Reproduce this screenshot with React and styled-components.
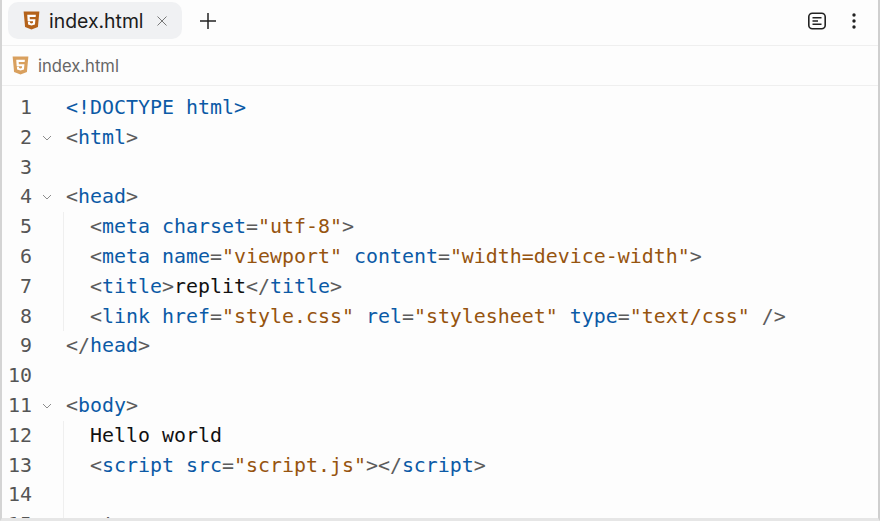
import React from "react";
import styled, { createGlobalStyle } from "styled-components";

const Global = createGlobalStyle`
  html, body {
    margin: 0;
    padding: 0;
    background: #fdfdfd;
    overflow: hidden;
  }
`;

const P = (t) => ["p", t];
const T = (t) => ["t", t];
const S = (t) => ["s", t];
const X = (t) => ["x", t];

const tag = (name) => [P("<"), T(name)];

const LINES = [
  { tokens: [T("<!DOCTYPE html>")] },
  { fold: true, tokens: [...tag("html"), P(">")] },
  { tokens: [] },
  { fold: true, tokens: [...tag("head"), P(">")] },
  { indent: true, tokens: [...tag("meta"), T(" charset"), P("="), S('"utf-8"'), P(">")] },
  {
    indent: true,
    tokens: [...tag("meta"), T(" name"), P("="), S('"viewport"'), T(" content"), P("="), S('"width=device-width"'), P(">")],
  },
  { indent: true, tokens: [...tag("title"), P(">"), X("replit"), P("</"), T("title"), P(">")] },
  {
    indent: true,
    tokens: [...tag("link"), T(" href"), P("="), S('"style.css"'), T(" rel"), P("="), S('"stylesheet"'), T(" type"), P("="), S('"text/css"'), P(" />")],
  },
  { tokens: [P("</"), T("head"), P(">")] },
  { tokens: [] },
  { fold: true, tokens: [...tag("body"), P(">")] },
  { indent: true, tokens: [X("Hello world")] },
  {
    indent: true,
    tokens: [...tag("script"), T(" src"), P("="), S('"script.js"'), P("></"), T("script"), P(">")],
  },
  { indent: true, tokens: [] },
  { indent: true, tokens: [P("<!--")] },
];

const TOKEN_COLORS = {
  p: "#5c5c5c",
  t: "#0b5aa6",
  s: "#96540f",
  x: "#111111",
};

const Html5Icon = ({ color, width, height }) => (
  <svg width={width} height={height} viewBox="0 0 16 18" preserveAspectRatio="none">
    <path fill={color} d="M0.6 0.5h14.8l-1.35 14.6L8 17.5l-6.05-2.4z" />
    <path
      fill="#fff"
      d="M4 3.6h8.1l-.2 2.2H6.3l.15 1.9h5.25l-.45 5L8 13.7l-3.2-1-.2-2.4h2l.1 1.05 1.3.4 1.3-.4.15-1.65H4.4z"
    />
  </svg>
);

const Chevron = () => (
  <svg width="10" height="6" viewBox="0 0 10 6" fill="none">
    <path d="M1 1l4 4 4-4" stroke="#8d8d8d" strokeWidth="1" />
  </svg>
);

const App = () => {
  return (
    <Frame>
      <Global />
      <TabBar>
        <Tab>
          <Html5Icon color="#b4621a" width={17} height={19} />
          <TabName>index.html</TabName>
          <svg width="10" height="10" viewBox="0 0 10 10">
            <path d="M0.5 0.5l9 9M9.5 0.5l-9 9" stroke="#777" strokeWidth="1" />
          </svg>
        </Tab>
        <PlusButton>
          <svg width="18" height="18" viewBox="0 0 18 18">
            <path d="M9 1v16M1 9h16" stroke="#222" strokeWidth="1.5" />
          </svg>
        </PlusButton>
        <TabActions>
          <svg width="20" height="20" viewBox="0 0 20 20" fill="none" stroke="#222" strokeWidth="1.6">
            <rect x="1.8" y="2.3" width="16.4" height="15.4" rx="3.5" />
            <path d="M5.5 6.7h9M5.5 10h5.5M5.5 13.3h9" />
          </svg>
          <svg width="4" height="16" viewBox="0 0 4 16" fill="#222">
            <circle cx="2" cy="2" r="1.7" />
            <circle cx="2" cy="8" r="1.7" />
            <circle cx="2" cy="14" r="1.7" />
          </svg>
        </TabActions>
      </TabBar>
      <PathBar>
        <Html5Icon color="#d9a05e" width={17} height={19} />
        <span>index.html</span>
      </PathBar>
      <Code>
        {LINES.map((line, i) => (
          <Line key={i}>
            <LineNo>{i + 1}</LineNo>
            <Fold>{line.fold && <Chevron />}</Fold>
            <Content $indent={line.indent}>
              {line.tokens.map(([kind, text], j) => (
                <Token key={j} $kind={kind}>
                  {text}
                </Token>
              ))}
            </Content>
          </Line>
        ))}
      </Code>
    </Frame>
  );
};

export default App;

const Frame = styled.div`
  box-sizing: border-box;
  width: 880px;
  height: 521px;
  display: flex;
  flex-direction: column;
  overflow: hidden;
  background: #fdfdfd;
  border-left: 2px solid #d4d4d4;
  border-right: 2px solid #cfcfcf;
  border-bottom: 3px solid #e6e6e6;
`;

/**tabs */
const TabBar = styled.div`
  box-sizing: border-box;
  flex: 0 0 46px;
  display: flex;
  align-items: flex-start;
  padding: 2px 22px 0 6px;
  border-bottom: 1px solid #efefef;
`;

const Tab = styled.div`
  box-sizing: border-box;
  width: 174px;
  height: 37px;
  display: flex;
  align-items: center;
  padding: 0 15px 0 15px;
  border-radius: 10px;
  background: #f0f1f3;
`;

const TabName = styled.span`
  flex: 1;
  margin-left: 9px;
  font-family: "Inter", "Noto Sans", sans-serif;
  font-size: 19.4px;
  color: #1c1c1c;
`;

const PlusButton = styled.div`
  display: flex;
  align-items: center;
  height: 37px;
  margin-left: 17px;
`;

const TabActions = styled.div`
  display: flex;
  align-items: center;
  gap: 25px;
  height: 37px;
  margin-left: auto;
`;

/**breadcrumb */
const PathBar = styled.div`
  box-sizing: border-box;
  flex: 0 0 40px;
  display: flex;
  align-items: center;
  gap: 9px;
  padding: 0 0 0 10px;
  border-bottom: 1px solid #efefef;
  font-family: "Inter", "Noto Sans", sans-serif;
  font-size: 16.6px;
  color: #666;
`;

/**code */
const Code = styled.div`
  flex: 1;
  overflow: hidden;
  padding-top: 7px;
  font-family: "DejaVu Sans Mono", "Liberation Mono", monospace;
  font-size: 19.93px;
`;

const Line = styled.div`
  display: flex;
  height: 29.8px;
  line-height: 29.8px;
  white-space: pre;
`;

const LineNo = styled.div`
  width: 30px;
  text-align: right;
  color: #555;
`;

const Fold = styled.div`
  width: 34px;
  padding-left: 10px;
  box-sizing: border-box;
  display: flex;
  align-items: center;
`;

/* indented lines carry the faint guide just left of the code column */
const Content = styled.div`
  ${(p) =>
    p.$indent
      ? `
    margin-left: -3px;
    padding-left: 26px;
    border-left: 1px solid #efefef;
  `
      : ""}
`;

const Token = styled.span`
  color: ${(p) => TOKEN_COLORS[p.$kind]};
`;
